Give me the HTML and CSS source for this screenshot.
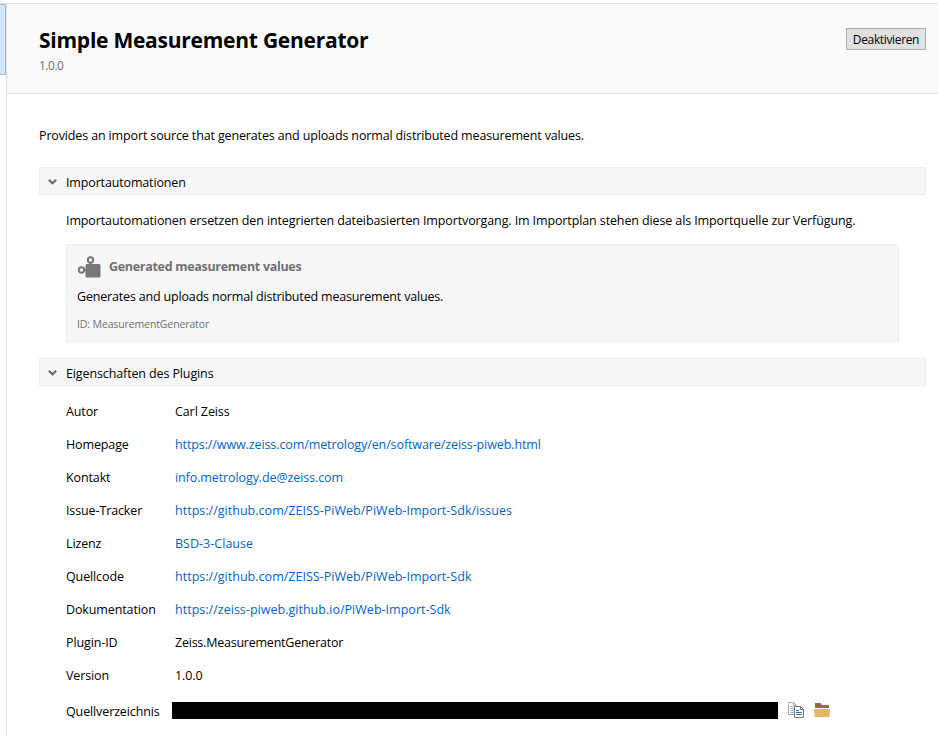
FILE: index.html
```html
<!DOCTYPE html>
<html lang="de">
<head><meta charset="utf-8"><title>Simple Measurement Generator</title><link rel="stylesheet" href="styles.css"></head>
<body>
<div class="app">
  <aside class="rail"><div class="selected"></div></aside>
  <main class="detail">
    <header class="head">
      <div><h1>Simple Measurement Generator</h1><div class="ver">1.0.0</div></div>
      <button class="btn">Deaktivieren</button>
    </header>
    <div class="body">
      <p class="desc">Provides an import source that generates and uploads normal distributed measurement values.</p>
      <section>
        <div class="bar"><svg class="chev" viewBox="0 0 9 6"><path d="M.8 .8l3.700 3.500L8.200 .8"/></svg><span class="wide">Importautomationen</span></div>
        <p class="info">Importautomationen ersetzen den integrierten dateibasierten Importvorgang. Im Importplan stehen diese als Importquelle zur Verfügung.</p>
        <article class="card">
          <div class="card-head">
            <svg class="gen" viewBox="0 0 24 22"><path class="fill" d="M10 8h2.500V6h2v2h7.500a1.500 1.500 0 0 1 1.500 1.500v10.500a1.500 1.500 0 0 1-1.500 1.500h-12A1.500 1.500 0 0 1 8.500 20v-5H7v-2h1.500V9.500A1.500 1.500 0 0 1 10 8z"/><circle cx="13.500" cy="4" r="2.700"/><circle cx="4.500" cy="14" r="2.700"/></svg>
            <h2>Generated measurement values</h2>
          </div>
          <p class="card-text">Generates and uploads normal distributed measurement values.</p>
          <p class="card-id">ID: MeasurementGenerator</p>
        </article>
      </section>
      <section>
        <div class="bar"><svg class="chev" viewBox="0 0 9 6"><path d="M.8 .8l3.700 3.500L8.200 .8"/></svg><span>Eigenschaften des Plugins</span></div>
        <dl class="props">
          <dt>Autor</dt><dd>Carl Zeiss</dd>
          <dt>Homepage</dt><dd><a>https://www.zeiss.com/metrology/en/software/zeiss-piweb.html</a></dd>
          <dt>Kontakt</dt><dd><a>info.metrology.de@zeiss.com</a></dd>
          <dt>Issue-Tracker</dt><dd><a class="repo">https://github.com/ZEISS-PiWeb/PiWeb-Import-Sdk/issues</a></dd>
          <dt>Lizenz</dt><dd><a class="repo">BSD-3-Clause</a></dd>
          <dt>Quellcode</dt><dd><a class="repo">https://github.com/ZEISS-PiWeb/PiWeb-Import-Sdk</a></dd>
          <dt>Dokumentation</dt><dd><a class="repo">https://zeiss-piweb.github.io/PiWeb-Import-Sdk</a></dd>
          <dt>Plugin-ID</dt><dd class="plugin">Zeiss.MeasurementGenerator</dd>
          <dt>Version</dt><dd>1.0.0</dd>
        </dl>
        <div class="source">
          <span class="source-label">Quellverzeichnis</span><div class="path"></div>
          <svg class="copy" viewBox="0 0 16 16"><g fill="#fff" stroke="#aaa"><path d="M.5 .5h5l3 3v9h-8z"/><path d="M5.500 .5v3h3" fill="none"/></g><path d="M2 4.500h3M2 6.500h4M2 8.500h4M2 10.500h4" stroke="#9bb8cf"/><path d="M6.500 4.500h6l3 3v8h-9z" fill="#fff" stroke="#777"/><path d="M12.500 4.500v3h3" fill="none" stroke="#777"/><path d="M8 8.500h3M8 10.500h6M8 12.500h6" stroke="#39719f"/></svg>
          <svg class="folder" viewBox="0 0 16 15"><path d="M1 0h5.500l1.500 2h7v3H1z" fill="#94702a"/><path d="M0 6h16l-.5 8H.5z" fill="#e8b562"/></svg>
        </div>
      </section>
    </div>
  </main>
</div>
</body>
</html>
```
FILE: styles.css
```css
* { box-sizing: border-box; margin: 0; padding: 0; }
body { width: 938px; height: 736px; overflow: hidden; background: #fff; color: #000; font: 12.5px/18px "Open Sans", sans-serif; letter-spacing: -.12px; }
.app { display: flex; height: 733px; margin-top: 3px; border-top: 1px solid #e0e0e0; }
.rail { width: 7px; border-right: 1px solid #e0e0e0; }
.selected { height: 71px; background: #d3e4fc; border: 1px solid #9dbddf; border-left: 0; }
.detail { flex: 1; }
.head { height: 90px; display: flex; justify-content: space-between; padding: 22px 12px 0 32px; background: #fafafa; border-bottom: 1px solid #e0e0e0; }
h1 { font-size: 21px; line-height: 28px; letter-spacing: -.25px; }
.ver { margin-top: 3px; font-size: 12px; letter-spacing: -.5px; color: #707070; }
.btn { width: 80px; height: 22px; margin-top: 2px; padding-top: 2px; background: #e1e1e1; border: 1px solid #adadad; font: 12px/18px "Open Sans", sans-serif; letter-spacing: -.35px; }
.body { padding: 33px 12px 0 32px; }
.desc { margin-bottom: 22px; letter-spacing: -.14px; }
.bar { height: 28px; display: flex; align-items: center; padding: 2px 0 0 8px; background: #f7f7f7; border: 1px solid #eee; }
.bar span { padding-top: 1px; }
.wide { letter-spacing: -.15px; }
.chev { width: 9px; height: 6px; margin-right: 9px; fill: none; stroke: #666; stroke-width: 2; }
.info { margin: 17px 0 14px 27px; letter-spacing: -.115px; }
.card { height: 98px; margin: 0 27px 16px; padding: 11px 10px; background: #f7f7f7; border: 1px solid #eee; }
.card-head { display: flex; height: 22px; }
.gen { width: 24px; height: 22px; margin-right: 8px; fill: none; stroke: #777; stroke-width: 2; }
.gen .fill { fill: #777; stroke: none; }
h2 { font-size: 12.5px; line-height: 22px; letter-spacing: -.3px; color: #707070; }
.card-text { margin-top: 10px; letter-spacing: -.175px; }
.card-id { margin-top: 9px; font-size: 10.5px; color: #707070; }
.props { display: grid; grid-template-columns: 109px 1fr; grid-auto-rows: 33px; padding: 17px 0 0 27px; }
dd { letter-spacing: -.1px; }
.repo { letter-spacing: .02px; }
.plugin { letter-spacing: -.23px; }
a { color: #0066cc; }
.source { display: flex; align-items: center; height: 18px; margin: 1px 0 0 27px; }
.source-label { width: 106px; padding-top: 3px; white-space: nowrap; }
.path { width: 606px; height: 17px; background: #000; }
.copy { width: 16px; height: 16px; margin-left: 10px; }
.folder { width: 16px; height: 15px; margin-left: 10px; }
```
